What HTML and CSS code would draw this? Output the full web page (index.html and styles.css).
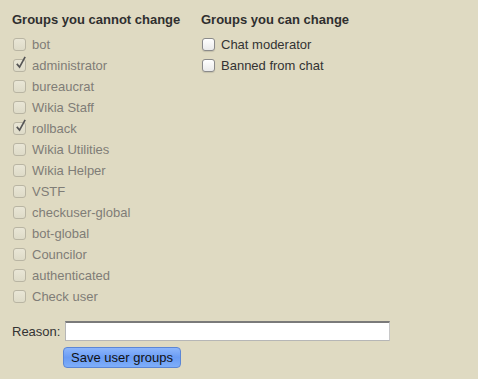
FILE: index.html
```html
<!DOCTYPE html>
<html>
<head>
<meta charset="utf-8">
<link rel="stylesheet" href="styles.css">
</head>
<body>
<form class="groups">
  <div class="columns">
    <div class="col col-fixed">
      <h4 class="col-title">Groups you cannot change</h4>
      <ul class="list">
        <li class="item disabled"><span class="box"></span>bot</li>
        <li class="item disabled"><span class="box checked"><svg viewBox="0 0 14 16" class="tick"><path d="M3 9.5 L6 13 L12 2" /></svg></span>administrator</li>
        <li class="item disabled"><span class="box"></span>bureaucrat</li>
        <li class="item disabled"><span class="box"></span>Wikia Staff</li>
        <li class="item disabled"><span class="box checked"><svg viewBox="0 0 14 16" class="tick"><path d="M3 9.5 L6 13 L12 2" /></svg></span>rollback</li>
        <li class="item disabled"><span class="box"></span>Wikia Utilities</li>
        <li class="item disabled"><span class="box"></span>Wikia Helper</li>
        <li class="item disabled"><span class="box"></span>VSTF</li>
        <li class="item disabled"><span class="box"></span>checkuser-global</li>
        <li class="item disabled"><span class="box"></span>bot-global</li>
        <li class="item disabled"><span class="box"></span>Councilor</li>
        <li class="item disabled"><span class="box"></span>authenticated</li>
        <li class="item disabled"><span class="box"></span>Check user</li>
      </ul>
    </div>
    <div class="col">
      <h4 class="col-title">Groups you can change</h4>
      <ul class="list">
        <li class="item"><span class="box"></span>Chat moderator</li>
        <li class="item"><span class="box"></span>Banned from chat</li>
      </ul>
    </div>
  </div>
  <div class="reason-row">
    <label class="reason-label">Reason:</label>
    <span class="reason-input"></span>
  </div>
  <div class="submit-row">
    <span class="save-btn">Save user groups</span>
  </div>
</form>
</body>
</html>
```
FILE: styles.css
```css
html, body {
  margin: 0;
  padding: 0;
  background: #dfdac2;
}
body {
  font-family: "Liberation Sans", Arial, sans-serif;
  font-size: 13px;
  color: #333;
  width: 478px;
  height: 379px;
  overflow: hidden;
}
.groups {
  padding: 12px 0 0 12px;
}
.columns {
  display: flex;
}
.col-fixed {
  width: 189px;
}
.col-title {
  margin: 0;
  font-size: 13px;
  font-weight: bold;
  color: #2f2f2f;
  line-height: 16px;
  height: 16px;
}
.list {
  list-style: none;
  margin: 6px 0 0 0;
  padding: 0;
}
.item {
  display: flex;
  align-items: center;
  height: 21px;
  line-height: 21px;
  color: #333;
  white-space: nowrap;
}
.item.disabled {
  color: #7f7d77;
}
.box {
  position: relative;
  box-sizing: border-box;
  width: 13px;
  height: 13px;
  margin: 0 6px 0 1px;
  border: 1px solid #8a8a8a;
  border-radius: 3px;
  background: linear-gradient(#ffffff, #eaeaea);
  box-shadow: 0 1px 1px rgba(0,0,0,0.12);
}
.disabled .box {
  border-color: #b9b5a3;
  background: linear-gradient(#e9e6d6, #dedbc8);
  box-shadow: none;
}
.tick {
  position: absolute;
  left: 0;
  top: -5px;
  width: 13px;
  height: 15px;
  overflow: visible;
}
.tick path {
  fill: none;
  stroke: #555;
  stroke-width: 1.8;
}
.reason-row {
  display: flex;
  align-items: center;
  margin-top: 14px;
}
.reason-label {
  width: 53px;
  color: #333;
}
.reason-input {
  box-sizing: border-box;
  width: 325px;
  height: 20px;
  background: #fff;
  border: 1px solid #b6b6b6;
  border-top: 2px solid #7a7a7a;
  border-right-color: #c8c8c8;
}
.submit-row {
  margin: 6px 0 0 51px;
}
.save-btn {
  display: inline-block;
  box-sizing: border-box;
  width: 118px;
  height: 21px;
  line-height: 19px;
  text-align: center;
  color: #111;
  border: 1px solid #5b86d6;
  border-radius: 4px;
  background: linear-gradient(#8db6fb, #6a9cf4 50%, #7eaefa);
}
```
